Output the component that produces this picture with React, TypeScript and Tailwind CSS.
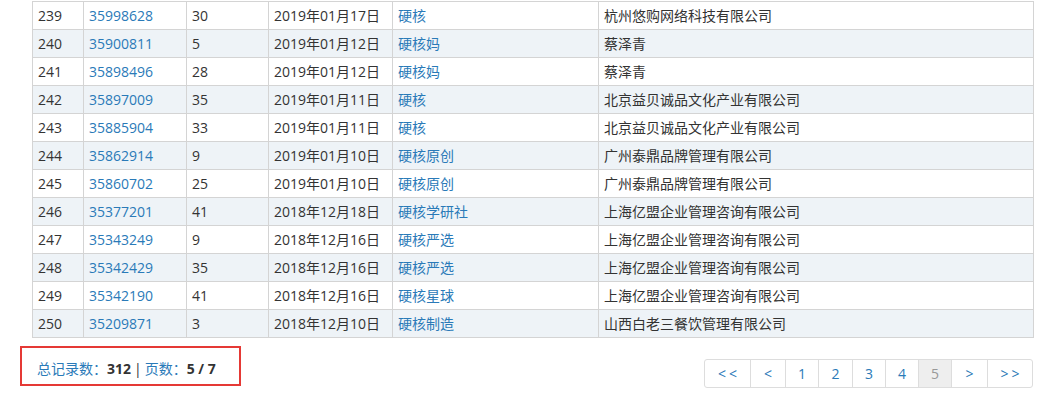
import React from 'react';

type Row = [number, string, string, string, string, string];

const rows: Row[] = [
  [239, '35998628', '30', '2019年01月17日', '硬核', '杭州悠购网络科技有限公司'],
  [240, '35900811', '5', '2019年01月12日', '硬核妈', '蔡泽青'],
  [241, '35898496', '28', '2019年01月12日', '硬核妈', '蔡泽青'],
  [242, '35897009', '35', '2019年01月11日', '硬核', '北京益贝诚品文化产业有限公司'],
  [243, '35885904', '33', '2019年01月11日', '硬核', '北京益贝诚品文化产业有限公司'],
  [244, '35862914', '9', '2019年01月10日', '硬核原创', '广州泰鼎品牌管理有限公司'],
  [245, '35860702', '25', '2019年01月10日', '硬核原创', '广州泰鼎品牌管理有限公司'],
  [246, '35377201', '41', '2018年12月18日', '硬核学研社', '上海亿盟企业管理咨询有限公司'],
  [247, '35343249', '9', '2018年12月16日', '硬核严选', '上海亿盟企业管理咨询有限公司'],
  [248, '35342429', '35', '2018年12月16日', '硬核严选', '上海亿盟企业管理咨询有限公司'],
  [249, '35342190', '41', '2018年12月16日', '硬核星球', '上海亿盟企业管理咨询有限公司'],
  [250, '35209871', '3', '2018年12月10日', '硬核制造', '山西白老三餐饮管理有限公司'],
];

const pages = ['<<', '<', '1', '2', '3', '4', '5', '>', '>>'];
const pageWidths = ['w-[45px]', 'w-[35px]', 'w-[33px]', 'w-[34px]', 'w-[33px]', 'w-[33px]', 'w-[33px]', 'w-[36px]', 'w-[45px]'];

const App: React.FC = () => {
  return (
    <div
      className="w-[1046px] h-[393px] bg-white text-[14px] text-[#333] overflow-hidden"
      style={{ fontFamily: '"Open Sans", "Noto Sans CJK SC", sans-serif' }}
    >
      {/* 列表 */}
      <table className="ml-[32px] mt-px w-[1002px] border-collapse table-fixed">
        <colgroup>
          <col className="w-[51px]" />
          <col className="w-[103px]" />
          <col className="w-[82px]" />
          <col className="w-[124px]" />
          <col className="w-[206px]" />
          <col />
        </colgroup>
        <tbody>
          {rows.map((r, i) => (
            <tr key={r[0]} className={i % 2 === 1 ? 'bg-[#eef3f7]' : 'bg-white'}>
              <td className="h-[28px] border border-[#d4d4d4] px-[5px] leading-none">{r[0]}</td>
              <td className="border border-[#d4d4d4] px-[5px] leading-none text-[#2a7ab8]">{r[1]}</td>
              <td className="border border-[#d4d4d4] px-[5px] leading-none">{r[2]}</td>
              <td className="border border-[#d4d4d4] px-[5px] leading-none">{r[3]}</td>
              <td className="border border-[#d4d4d4] px-[5px] leading-none text-[#2a7ab8]">{r[4]}</td>
              <td className="border border-[#d4d4d4] px-[5px] leading-none">{r[5]}</td>
            </tr>
          ))}
        </tbody>
      </table>

      {/* 分页 */}
      <div className="flex justify-between items-start ml-[20px] mr-[13px] mt-[8px]">
        <div className="w-[221px] h-[40px] border-2 border-[#e53935] flex items-center pl-[15px] pt-[4px]">
          <span className="text-[#2a7ab8]">总记录数：</span>
          <span className="font-bold">312</span>
          <span className="mx-[3px]">|</span>
          <span className="text-[#2a7ab8]">页数：</span>
          <span className="font-bold">5 / 7</span>
        </div>
        <div className="mt-[13px] flex h-[29px] border border-[#ddd] rounded-[3px] overflow-hidden">
          {pages.map((p, i) => (
            <div
              key={p + i}
              className={`${pageWidths[i]} flex items-center justify-center ${i > 0 ? 'border-l border-[#ddd]' : ''} ${
                p === '5' ? 'bg-[#eee] text-[#999]' : 'text-[#2a7ab8]'
              } ${p.length === 2 && p[0] === p[1] ? 'tracking-[3px] pl-[3px]' : ''}`}
            >
              {p}
            </div>
          ))}
        </div>
      </div>
    </div>
  );
};

export default App;
